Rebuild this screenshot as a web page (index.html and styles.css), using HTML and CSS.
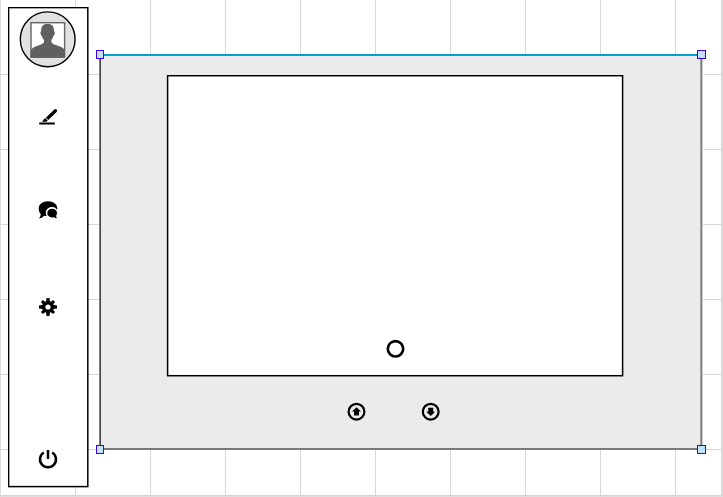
FILE: index.html
```html
<!DOCTYPE html>
<html lang="en">
<head>
<meta charset="utf-8">
<title>Wireframe canvas</title>
<link rel="stylesheet" href="styles.css">
</head>
<body>
<main class="workspace">
  <div class="paper"></div>
  <aside class="sidebar">
    <svg class="outline" viewBox="0 0 82 482"><rect x=".6" y=".6" width="79.2" height="479" fill="#fff" stroke="#000" stroke-width="1.5"/></svg>
    <svg class="avatar" viewBox="0 0 58 58">
      <circle cx="28.7" cy="29.3" r="27.4" fill="#e1e1e1" stroke="#000" stroke-width="1.4"/>
      <rect x="12" y="12.7" width="33.6" height="34.4" fill="#fff" stroke="#646464" stroke-width="1.4"/>
      <path fill="#606060" d="M11.6 47.8V41.5Q12 38.4 14.8 37.2 17.5 36.2 21.5 34.8 25 33.6 25 31.6V30Q23.3 28.5 23 26.2 21.6 25.5 21.4 22.8 21.4 21.5 22.2 21.3C21.7 16.6 24.2 13.7 28.6 13.7S35.5 16.6 35 21.3Q35.9 21.5 35.9 22.8 35.6 25.5 34.2 26.2 33.9 28.5 32.4 30V31.6Q32.4 33.6 35.9 34.8 40 36.2 42.8 37.2 45.6 38.4 46 41.5V47.8z"/>
    </svg>
    <svg class="icon edit" viewBox="0 0 20 20">
      <path d="M1.2 15.6h15.6v1.9H1.2zM7.8 10.7 15.8 2.9q1.6-1.4 2.9-.4 1.1 1.2-.3 2.7l-8.1 7.9zM3.3 14.7q1.8-.3 2.3-2.1.8-1.4 2.2-1l1.8 1.8q-.3 1.3-1.5 1.3z"/>
    </svg>
    <svg class="icon chat" viewBox="0 0 20 20">
      <g transform="translate(0 .4)">
        <path d="M10 .8c5.2 0 9.3 2.8 9.3 7.4q0 .8-.3 1.1C17.7 7.3 16 6.6 14.2 6.6 10.4 6.6 7.8 9.1 7.8 12.4q0 1.8.9 3.3-1.6 0-2.7-.3-1.8 2.5-5 2.6 1.9-1.9 1.7-4.4Q.7 11.5.7 8.3C.7 3.6 4.8.8 10 .8z"/>
        <path d="M14 8.4c2.9 0 5 1.8 5 4.3q0 1.5-.9 2.6-.1 1.4 1.1 2.5-1.9 0-3.1-1-4 .9-6.1-1.7-.7-1-.7-2.3C9.3 10.2 11.3 8.4 14 8.4z"/>
      </g>
    </svg>
    <svg class="icon gear" viewBox="-10 -10 20 20">
      <path d="M-1.9-5.5-1.5-9h3l.4 3.5v11L1.5 9h-3l-.4-3.5zM-5.5 1.9-9 1.5v-3l3.5-.4h11L9-1.5v3l-3.5.4z"/>
      <path transform="rotate(45)" d="M-1.7-5.5-1.4-8.6h2.8l.3 3.1v11L1.4 8.6h-2.8l-.3-3.1zM-5.5 1.7-8.6 1.4v-2.8l3.1-.3h11l3.1.3v2.8l-3.1.3z"/>
      <circle r="6"/><circle r="2.6" fill="#fff"/>
    </svg>
    <svg class="icon power" viewBox="0 0 20 20">
      <path d="M5.8 3.5a8 8 0 1 0 8.4 0M10 1v9" fill="none" stroke="#000" stroke-width="2.5"/>
    </svg>
  </aside>
  <section class="device">
    <svg class="outline" viewBox="0 0 606 398">
      <rect width="602" height="394" x="1" y="1" fill="#ebebeb"/>
      <path d="M.5 0v396" stroke="#1b9fd0"/><path d="M1.5 1v395" stroke="#484848"/>
      <path d="M1 394.5h602" stroke="#777"/><path d="M1 395.5h602" stroke="#1b9fd0"/>
      <path d="M601.5 0v395" stroke="#a0a0a0"/><path d="M602.5 0v396" stroke="#1b9fd0"/><path d="M603.5 0v396" stroke="#ccc"/>
      <path d="M1 1.5h602" stroke="#777"/><path d="M1 .5h602" stroke="#00a5d6" stroke-width="2"/>
    </svg>
    <div class="screen">
      <svg class="outline" viewBox="0 0 458 302"><rect x="1.6" y=".7" width="455" height="300" fill="#fff" stroke="#000" stroke-width="1.5"/></svg>
      <svg class="icon home" viewBox="0 0 20 20"><circle cx="10.5" cy="9.8" r="7.7" fill="none" stroke="#000" stroke-width="2.7"/></svg>
    </div>
    <div class="controls">
      <svg class="icon" viewBox="0 0 20 20"><g transform="translate(-.5 -.3)"><circle cx="10" cy="10" r="7.9" fill="none" stroke="#000" stroke-width="2.2"/><path d="m10 5.6 4.5 4.3h-2v4h-5v-4h-2z"/></g></svg>
      <svg class="icon" viewBox="0 0 20 20"><g transform="translate(-.3 -.3)"><circle cx="10" cy="10" r="7.9" fill="none" stroke="#000" stroke-width="2.2"/><path d="m10 14.4-4.5-4.3h2v-4h5v4h2z"/></g></svg>
    </div>
    <i class="handle top left"></i><i class="handle top right"></i>
    <i class="handle bottom left"></i><i class="handle bottom right"></i>
  </section>
</main>
</body>
</html>
```
FILE: styles.css
```css
* { box-sizing: border-box; }
body { margin: 0; overflow: hidden; }
svg { display: block; flex: none; }
.workspace {
  position: relative;
  width: 723px;
  height: 497px;
  overflow: hidden;
  background: #e0e0e0;
}
.paper {
  width: 721px;
  height: 495px;
  border-left: 1px solid #ddd;
  background-color: #fff;
  background-image:
    linear-gradient(to right, transparent 74px, #d8d8d8 74px),
    linear-gradient(to bottom, transparent 74px, #d8d8d8 74px);
  background-size: 75px 75px;
  box-shadow: 0 0 1px 1px #d6d6d6;
}
.sidebar {
  position: absolute;
  left: 8px;
  top: 7px;
  width: 82px;
  height: 482px;
  padding: 3px 0 0 11px;
}
.outline {
  position: absolute;
  inset: 0;
  width: 100%;
  height: 100%;
}
.avatar { position: relative; width: 58px; height: 58px; }
.icon { position: relative; width: 20px; height: 20px; }
.sidebar .icon { margin-left: 19px; }
.edit { margin-top: 39px; }
.chat { margin-top: 73px; }
.gear { margin-top: 77px; }
.power { margin-top: 132px; }
.device {
  position: absolute;
  left: 99px;
  top: 54px;
  width: 606px;
  height: 398px;
  padding: 21px 0 0 67px;
}
.screen {
  position: relative;
  display: flex;
  align-items: flex-end;
  justify-content: center;
  width: 458px;
  height: 302px;
  padding: 0 1px 18px 0;
}
.controls {
  position: relative;
  display: flex;
  justify-content: center;
  gap: 54px;
  width: 455px;
  margin-top: 25px;
}
.handle {
  position: absolute;
  width: 9px;
  height: 9px;
  border: 1px solid #3a00ec;
  background: #c2e2fb;
}
.top { top: -4px; }
.bottom { top: 391px; }
.left { left: -3px; width: 8px; }
.right { left: 598px; }
```
